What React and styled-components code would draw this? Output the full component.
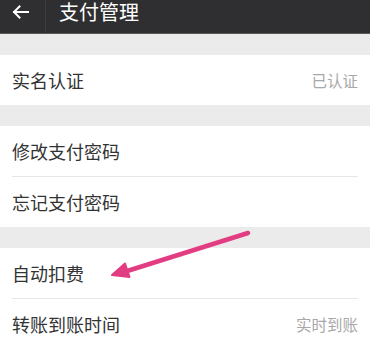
import React from "react";
import styled, { createGlobalStyle } from "styled-components";

const GlobalStyle = createGlobalStyle`
  html, body {
    margin: 0;
    padding: 0;
    background: #ebebeb;
    font-family: "Noto Sans CJK SC", "Noto Sans", sans-serif;
  }
`;

const sections = [
  [{ label: "实名认证", value: "已认证" }],
  [{ label: "修改支付密码" }, { label: "忘记支付密码" }],
  [{ label: "自动扣费" }, { label: "转账到账时间", value: "实时到账" }],
];

export default function App() {
  return (
    <Page>
      <GlobalStyle />
      <Header>
        <Back>
          <svg width="17" height="14" viewBox="0 0 17 14" fill="none">
            <path
              d="M16 7H2M7.5 1.5L2 7l5.5 5.5"
              stroke="#fff"
              strokeWidth="2"
              strokeLinecap="square"
            />
          </svg>
        </Back>
        <Title>支付管理</Title>
      </Header>
      {sections.map((rows, i) => (
        <Section key={i}>
          {rows.map(row => (
            <Row key={row.label}>
              <Label>{row.label}</Label>
              {row.value && <Value>{row.value}</Value>}
            </Row>
          ))}
        </Section>
      ))}
      {/* the pink pointer drawn over the screenshot */}
      <Pointer width="142" height="52" viewBox="0 0 142 52">
        <path d="M138 4L14 43" stroke="#e23d82" strokeWidth="4.5" strokeLinecap="round" />
        <path d="M2 46L15 34.5L19.5 48Z" fill="#e23d82" stroke="#e23d82" strokeWidth="2" strokeLinejoin="round" />
      </Pointer>
    </Page>
  );
}

const Page = styled.div`
  position: relative;
  width: 370px;
  min-height: 341px;
  overflow: hidden;
  background: #ebebeb;
`;

const Header = styled.div`
  display: flex;
  align-items: center;
  height: 34px;
  box-sizing: border-box;
  padding-bottom: 9px;
  background: #2f2f31;
  border-bottom: 1px solid #5a5a5c;
`;

const Back = styled.div`
  display: flex;
  align-items: center;
  justify-content: center;
  width: 46px;
  height: 34px;
  margin-top: 9px;
  box-sizing: border-box;
  padding-bottom: 9px;
  border-right: 1px solid #3c3c3e;
  padding-right: 4px;
`;

const Title = styled.div`
  margin-left: 13px;
  color: #fff;
  font-size: 20px;
  line-height: 24px;
`;

const Section = styled.div`
  margin-top: 21px;
  background: #fff;
  &:first-of-type {
    margin-top: 22px;
  }
`;

const Row = styled.div`
  display: flex;
  align-items: center;
  justify-content: space-between;
  height: 50px;
  margin: 0 12px 0 12px;
  & + & {
    border-top: 1px solid #e6e6e6;
  }
`;

const Label = styled.span`
  color: #333;
  font-size: 18px;
`;

const Value = styled.span`
  color: #a8a8a8;
  font-size: 15.5px;
`;

const Pointer = styled.svg`
  position: absolute;
  left: 110px;
  top: 229px;
`;
